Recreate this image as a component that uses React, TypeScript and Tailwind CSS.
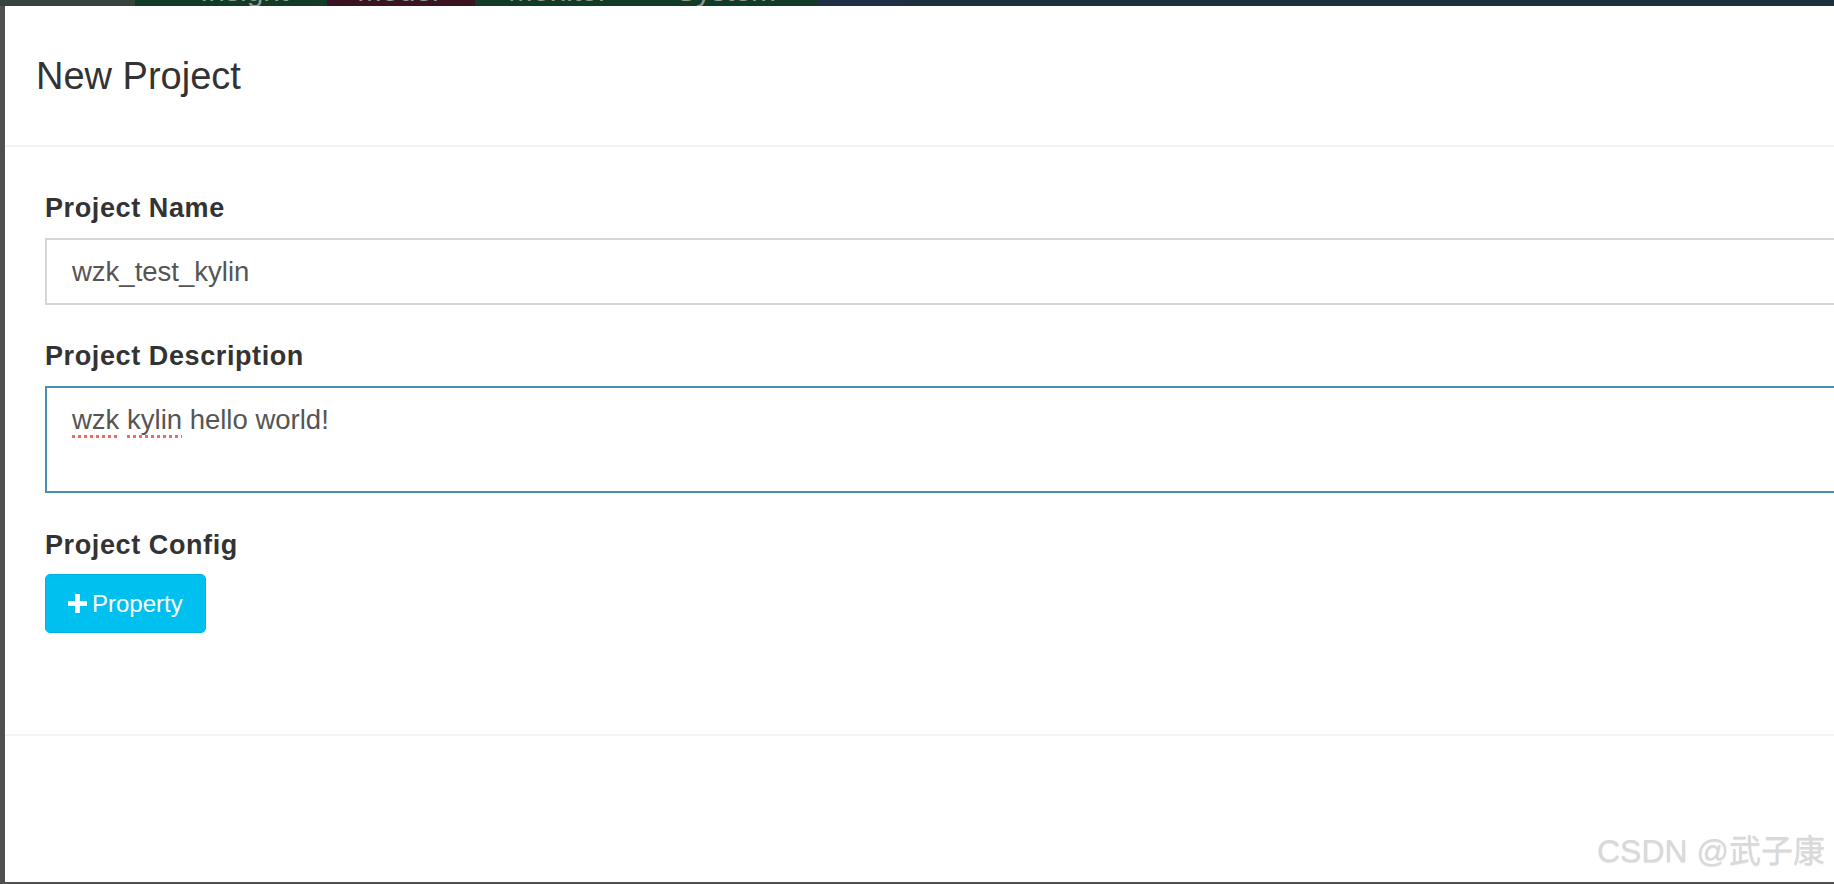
import { ReactNode } from "react";

// Strip of the navbar left visible above the modal
const TopStrip = () => {
  const label = "text-[30px] leading-[30px] mt-[-24px] text-[#8d9890] whitespace-nowrap";
  return (
    <div className="h-[6px] flex overflow-hidden flex-none">
      <div className="w-[135px] bg-[#37443d]" />
      <div className="w-[192px] bg-[#113a27] pl-[65px]">
        <div className={label}>Insight</div>
      </div>
      <div className="w-[148px] bg-[#3b1424] pl-[30px]">
        <div className={label}>Model</div>
      </div>
      <div className="w-[342px] bg-[#113a27] pl-[33px] flex gap-[68px]">
        <div className={label}>Monitor</div>
        <div className={label}>System</div>
      </div>
      <div className="w-[90px] bg-[#1e2f45]" />
      <div className="flex-1 bg-[#1b2f3c]" />
    </div>
  );
};

const Label = ({ children, className }: { children: ReactNode; className?: string }) => (
  <div className={`text-[27px] leading-[32px] font-bold text-[#333] tracking-[0.6px] ${className ?? ""}`}>
    {children}
  </div>
);

const PlusIcon = () => (
  <svg viewBox="0 0 20 20" className="w-[19px] h-[19px]" fill="currentColor">
    <rect x="7.5" y="0" width="5" height="20" />
    <rect x="0" y="7.5" width="20" height="5" />
  </svg>
);

const App = () => {
  return (
    <div className="w-[1834px] h-[884px] flex flex-col bg-[#4f4f4f] overflow-hidden font-[Liberation_Sans,Arial,sans-serif]">
      <TopStrip />
      <div className="flex flex-1 min-h-0 pl-[5px]">
        <div className="flex-1 bg-white flex flex-col relative">
          {/* header */}
          <div className="h-[141px] flex-none flex items-center pl-[31px] border-b-2 border-[#f3f3f3]">
            <h4 className="text-[38px] leading-[44px] text-[#333] font-normal">New Project</h4>
          </div>

          {/* body */}
          <div className="h-[587px] flex-none pl-[40px] pt-[45px] flex flex-col">
            <Label>Project Name</Label>
            <div className="mt-[14px] h-[67px] border-2 border-r-0 border-[#d6d6d6] flex items-center pl-[25px] text-[27.5px] text-[#555]">
              wzk_test_kylin
            </div>

            <Label className="mt-[35px]">Project Description</Label>
            <div className="mt-[14px] h-[107px] border-2 border-r-0 border-[#4b8db2] pl-[25px] pt-[12px] text-[27.5px] leading-[40px] text-[#555]">
              <span className="underline decoration-dotted decoration-[#ec6a64] decoration-[3px] underline-offset-[6px]">wzk</span>{" "}
              <span className="underline decoration-dotted decoration-[#ec6a64] decoration-[3px] underline-offset-[6px]">kylin</span>{" "}
              hello world!
            </div>

            <Label className="mt-[36px]">Project Config</Label>
            <button className="mt-[13px] w-[161px] h-[59px] flex items-center gap-[5px] pl-[22px] rounded-[5px] bg-[#00c0ef] border border-[#00b3e0] text-white text-[24px] leading-[28px]">
              <PlusIcon />
              <span>Property</span>
            </button>
          </div>

          {/* footer */}
          <div className="flex-1 border-t-2 border-[#f3f3f3]" />

          <div className="absolute right-[9px] bottom-[13px] text-[32px] leading-[36px] text-[#d9d9d9] [text-shadow:0_1px_1px_rgba(0,0,0,0.12)] font-[Liberation_Sans,Noto_Sans_CJK_SC,sans-serif]">
            CSDN @武子康
          </div>
        </div>
      </div>
      <div className="h-[2px] flex-none" />
    </div>
  );
};

export default App;
